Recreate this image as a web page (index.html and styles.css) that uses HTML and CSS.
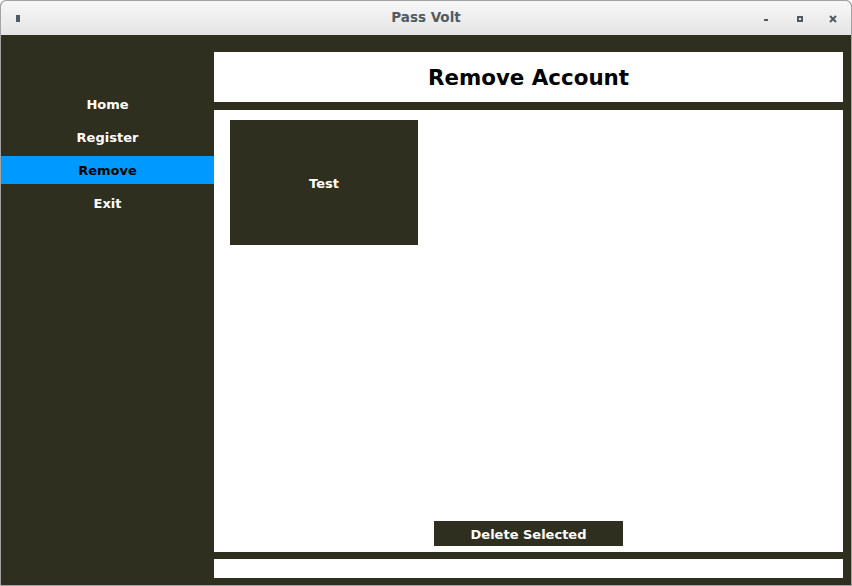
FILE: index.html
```html
<!DOCTYPE html>
<html>
<head>
<meta charset="utf-8">
<link rel="stylesheet" href="styles.css">
</head>
<body>
<div class="window">
  <div class="titlebar">
    <span class="app-icon"></span>
    <span class="title">Pass Volt</span>
    <div class="controls">
      <svg class="ctl" width="8" height="8" viewBox="0 0 8 8"><rect x="1" y="4" width="4" height="2" fill="#4f5b62"/></svg>
      <svg class="ctl" width="8" height="8" viewBox="0 0 8 8"><path d="M1 1h6v6h-6z M3 3v2h2v-2z" fill="#4f5b62" fill-rule="evenodd"/></svg>
      <svg class="ctl" width="8" height="8" viewBox="0 0 8 8"><path d="M1 1L7 7M7 1L1 7" stroke="#4f5b62" stroke-width="2"/></svg>
    </div>
  </div>
  <div class="body">
    <nav class="sidebar">
      <div class="nav-item">Home</div>
      <div class="nav-item">Register</div>
      <div class="nav-item active">Remove</div>
      <div class="nav-item">Exit</div>
    </nav>
    <main class="main">
      <div class="header">Remove Account</div>
      <div class="content">
        <div class="cards">
          <div class="card">Test</div>
        </div>
        <div class="actions">
          <div class="btn">Delete Selected</div>
        </div>
      </div>
      <div class="status"></div>
    </main>
  </div>
</div>
</body>
</html>
```
FILE: styles.css
```css
* { box-sizing: border-box; }
html, body { margin: 0; padding: 0; background: #fff; }
body { font-family: "DejaVu Sans", Verdana, sans-serif; }
.window {
  width: 852px;
  height: 586px;
  border: 1px solid #a3a3a3;
  border-radius: 6px 6px 0 0;
  overflow: hidden;
  display: flex;
  flex-direction: column;
  background: #2f2f1f;
}
.titlebar {
  height: 34px;
  flex: none;
  background: linear-gradient(#f8f8f8, #e4e4e4);
  display: flex;
  align-items: center;
  position: relative;
}
.app-icon {
  width: 4px;
  height: 7px;
  background: #4f5b62;
  margin-left: 15px;
  margin-top: 1px;
}
.title {
  position: absolute;
  left: 0;
  right: 0;
  text-align: center;
  font-weight: bold;
  font-size: 13.5px;
  color: #4f5b62;
  top: 8px;
}
.controls {
  margin-left: auto;
  display: flex;
  gap: 25px;
  margin-right: 14px;
  margin-top: 2px;
}
.ctl { display: block; }
.body {
  flex: 1;
  display: flex;
  background: #2f2f1f;
}
.sidebar {
  width: 213px;
  flex: none;
  padding-top: 55px;
  display: flex;
  flex-direction: column;
  gap: 5px;
}
.nav-item {
  height: 28px;
  line-height: 28px;
  padding-top: 1px;
  text-align: center;
  color: #fff;
  font-weight: bold;
  font-size: 13px;
}
.nav-item.active {
  background: #0099ff;
  color: #000;
}
.main {
  flex: 1;
  padding: 17px 8px 7px 0;
  display: flex;
  flex-direction: column;
}
.header {
  height: 50px;
  background: #fff;
  display: flex;
  align-items: center;
  justify-content: center;
  font-weight: bold;
  font-size: 21.4px;
  color: #000;
  padding-top: 1px;
}
.content {
  margin-top: 8px;
  height: 442px;
  background: #fff;
  padding: 10px 16px 6px;
  display: flex;
  flex-direction: column;
}
.cards { flex: 1; display: flex; align-items: flex-start; }
.card {
  width: 188px;
  height: 125px;
  background: #2f2f1f;
  color: #fff;
  font-weight: bold;
  font-size: 13px;
  display: flex;
  align-items: center;
  justify-content: center;
  padding-top: 2px;
}
.actions { display: flex; justify-content: center; }
.btn {
  width: 189px;
  height: 25px;
  background: #2f2f1f;
  color: #fff;
  font-weight: bold;
  font-size: 13px;
  display: flex;
  align-items: center;
  justify-content: center;
  padding-top: 2px;
}
.status {
  margin-top: 7px;
  height: 19px;
  background: #fff;
}
```
